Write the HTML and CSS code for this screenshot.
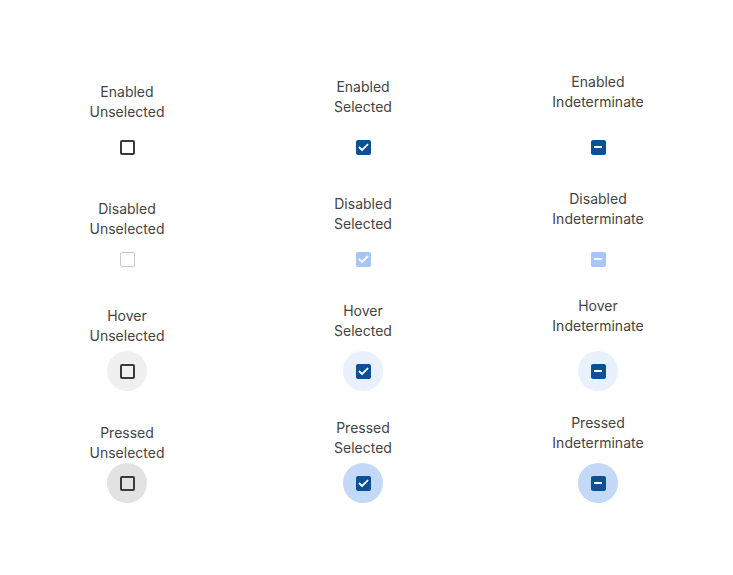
FILE: index.html
```html
<!DOCTYPE html>
<html>
<head>
<meta charset="utf-8">
<link rel="stylesheet" href="styles.css">
</head>
<body>
<div class="grid">
  <div class="cell"><div class="label g5">Enabled<br>Unselected</div><div class="target"><span class="box"></span></div></div>
  <div class="cell"><div class="label g10">Enabled<br>Selected</div><div class="target"><span class="box on"><svg viewBox="0 0 15 15"><path d="M3.6 7.6 L6.1 10 L11.4 4.7"/></svg></span></div></div>
  <div class="cell"><div class="label g15">Enabled<br>Indeterminate</div><div class="target"><span class="box on"><i class="dash"></i></span></div></div>

  <div class="cell"><div class="label g0">Disabled<br>Unselected</div><div class="target"><span class="box dis"></span></div></div>
  <div class="cell"><div class="label g5">Disabled<br>Selected</div><div class="target"><span class="box on dis"><svg viewBox="0 0 15 15"><path d="M3.6 7.6 L6.1 10 L11.4 4.7"/></svg></span></div></div>
  <div class="cell"><div class="label g10">Disabled<br>Indeterminate</div><div class="target"><span class="box on dis"><i class="dash"></i></span></div></div>

  <div class="cell"><div class="label g5">Hover<br>Unselected</div><div class="target hover-off"><span class="box"></span></div></div>
  <div class="cell"><div class="label g10">Hover<br>Selected</div><div class="target hover-on"><span class="box on"><svg viewBox="0 0 15 15"><path d="M3.6 7.6 L6.1 10 L11.4 4.7"/></svg></span></div></div>
  <div class="cell"><div class="label g15">Hover<br>Indeterminate</div><div class="target hover-on"><span class="box on"><i class="dash"></i></span></div></div>

  <div class="cell"><div class="label g0">Pressed<br>Unselected</div><div class="target press-off"><span class="box"></span></div></div>
  <div class="cell"><div class="label g5">Pressed<br>Selected</div><div class="target press-on"><span class="box on"><svg viewBox="0 0 15 15"><path d="M3.6 7.6 L6.1 10 L11.4 4.7"/></svg></span></div></div>
  <div class="cell"><div class="label g10">Pressed<br>Indeterminate</div><div class="target press-on"><span class="box on"><i class="dash"></i></span></div></div>
</div>
</body>
</html>
```
FILE: styles.css
```css
html, body {
  margin: 0;
  padding: 0;
  background: #ffffff;
}
body {
  font-family: Inter, "Noto Sans", sans-serif;
  font-size: 14px;
  line-height: 20px;
  color: #444444;
}
.grid {
  display: grid;
  grid-template-columns: 236px 236px 234px;
  grid-auto-rows: 112px;
  margin: 55px 0 0 9px;
}
.cell {
  display: flex;
  flex-direction: column;
  justify-content: flex-end;
  align-items: center;
}
.label {
  text-align: center;
}
.g0 { margin-bottom: 0; }
.g5 { margin-bottom: 5px; }
.g10 { margin-bottom: 10px; }
.g15 { margin-bottom: 15px; }
.target {
  width: 40px;
  height: 40px;
  border-radius: 50%;
  display: flex;
  align-items: center;
  justify-content: center;
}
.hover-off { background: #f0f0f0; }
.press-off { background: #e2e2e2; }
.hover-on { background: #e9f1fd; }
.press-on { background: #c4d8f8; }
.box {
  box-sizing: border-box;
  width: 15px;
  height: 15px;
  border: 2px solid #3a3a3a;
  border-radius: 2px;
  display: flex;
  align-items: center;
  justify-content: center;
}
.box.dis {
  border: 1.5px solid #c9c9c9;
}
.box.on {
  border: none;
  background: #0c5196;
}
.box.on.dis {
  background: #a8c5f7;
}
.box svg {
  width: 15px;
  height: 15px;
  display: block;
}
.box svg path {
  fill: none;
  stroke: #ffffff;
  stroke-width: 1.8;
  stroke-linecap: square;
  stroke-linejoin: miter;
}
.dash {
  display: block;
  width: 8px;
  height: 2px;
  background: #ffffff;
}
```
